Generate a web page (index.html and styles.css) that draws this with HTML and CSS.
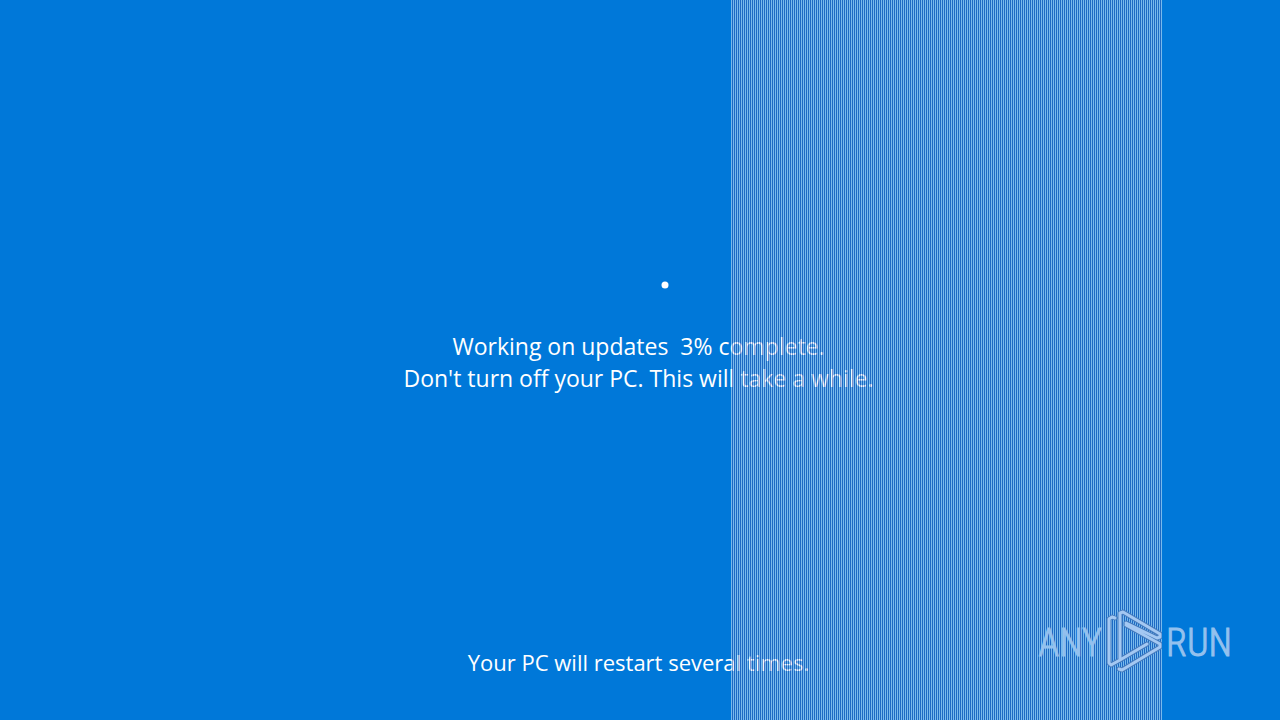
FILE: index.html
```html
<!DOCTYPE html>
<html lang="en">
<head>
<meta charset="utf-8">
<title>Working on updates</title>
<link rel="stylesheet" href="styles.css">
</head>
<body>
<main class="screen">
  <section class="progress">
    <svg class="spinner" viewBox="0 0 60 60" aria-hidden="true"><circle cx="56" cy="30" r="3.5" fill="#fff"/></svg>
    <p class="message">Working on updates&nbsp; 3% complete.<br>Don't turn off your PC. This will take a while.</p>
  </section>
  <p class="message notice">Your PC will restart several times.</p>
</main>
<div class="stripes"></div>
<div class="brand">
  <span class="word">ANY</span>
  <svg class="mark" viewBox="0 0 56 64" aria-hidden="true">
    <defs>
      <path id="mark" d="M9 9L6 8L3 10V54L5 56L14 51L41 35M14 50V4L17 3L54 25V28L51 29L20 14M20 16L54 35V38L16 61L13 60"/>
    </defs>
    <use class="shade" href="#mark"/>
    <use class="line" href="#mark"/>
  </svg>
  <span class="word">RUN</span>
</div>
</body>
</html>
```
FILE: styles.css
```css
body {
  margin: 0;
  background: #0078d9;
  color: #fff;
  font-family: "Open Sans", "Noto Sans", sans-serif;
}
.screen {
  min-height: 100vh;
  box-sizing: border-box;
  padding: 255px 3px 42px 0;
  display: flex;
  flex-direction: column;
  align-items: center;
  justify-content: space-between;
}
.progress {
  display: flex;
  flex-direction: column;
  align-items: center;
  gap: 15px;
}
.spinner {
  width: 60px;
  height: 60px;
}
.message {
  margin: 0;
  font-size: 23px;
  line-height: 32px;
  text-align: center;
}
.notice {
  font-size: 22px;
}
.stripes {
  position: absolute;
  top: 0;
  bottom: 0;
  left: 731px;
  width: 431px;
  background: repeating-linear-gradient(90deg, rgba(240, 250, 255, 0.5) 0 1px, rgba(50, 95, 180, 0.58) 1px 2px);
}
.brand {
  position: absolute;
  right: 48px;
  bottom: 47px;
  display: flex;
  align-items: center;
  gap: 4px;
  color: #94c1ee;
}
.word {
  padding-top: 3px;
  font-family: "Liberation Sans Narrow", "Roboto Condensed", sans-serif;
  font-weight: 300;
  font-size: 38px;
  line-height: 60px;
  -webkit-text-stroke: 1px #94c1ee;
}
.mark {
  width: 56px;
  height: 64px;
}
.shade,
.line {
  fill: none;
  stroke-linejoin: round;
  stroke-linecap: round;
}
.shade {
  stroke: #477cbd;
  stroke-width: 5;
}
.line {
  stroke: #a4c8f2;
  stroke-width: 3;
}
```
